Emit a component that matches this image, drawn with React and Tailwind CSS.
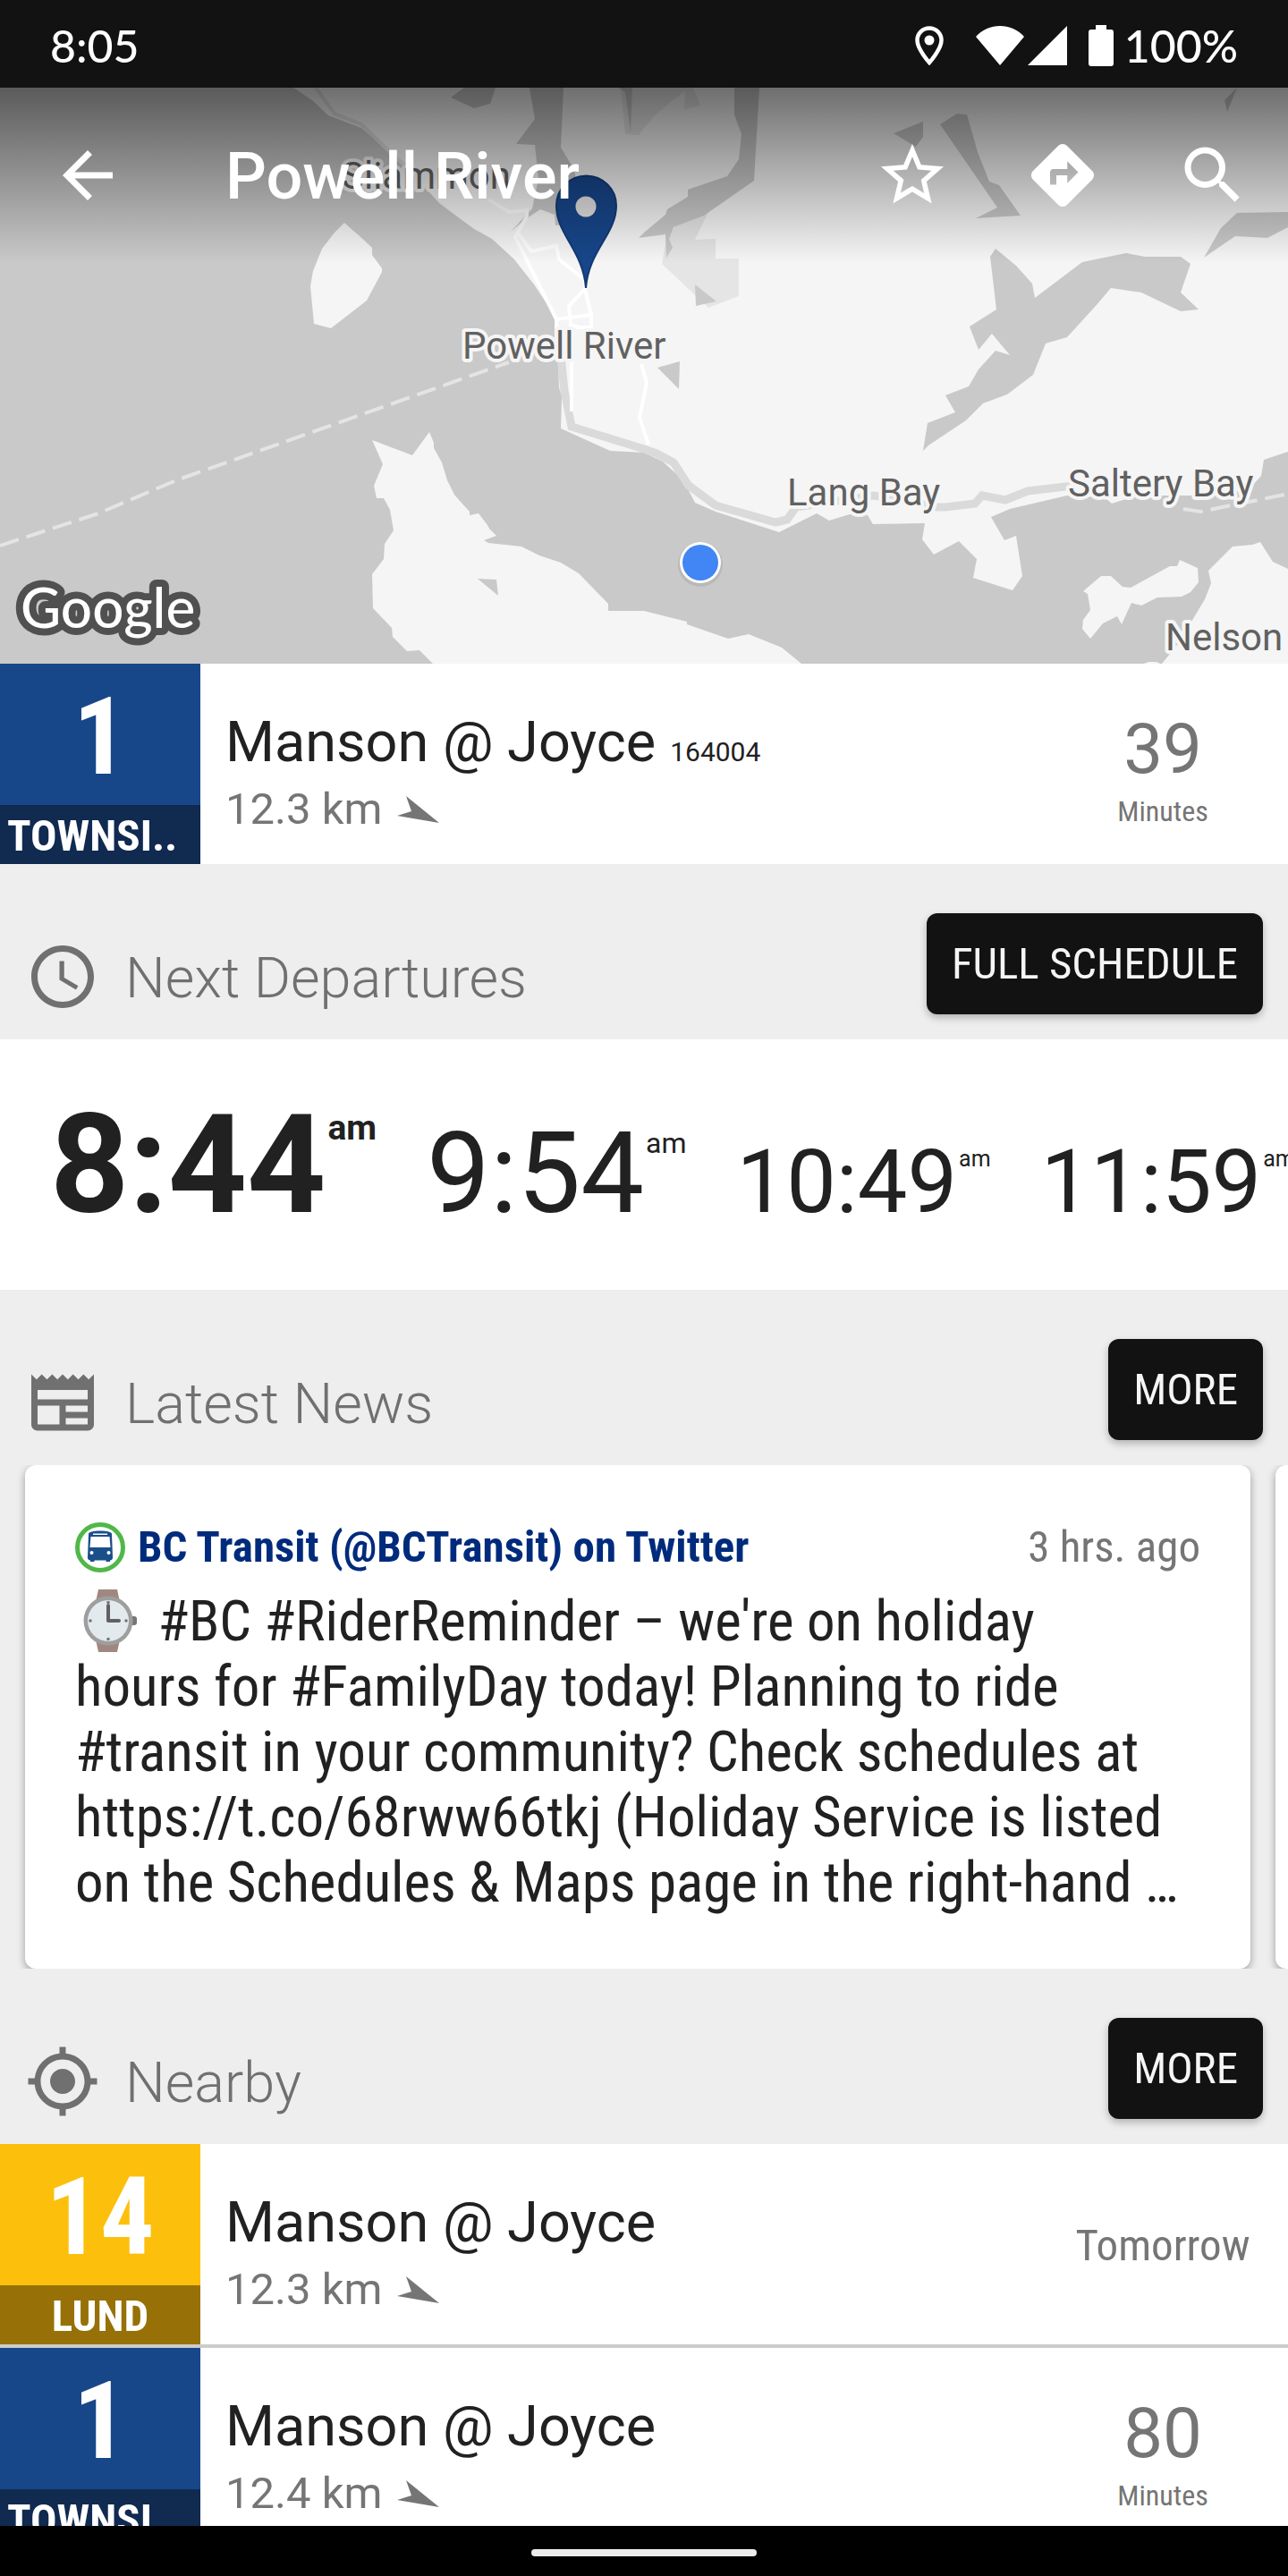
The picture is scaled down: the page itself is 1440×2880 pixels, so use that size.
import { MdAccessTime, MdArrowBack, MdDirections, MdGpsFixed, MdSearch, MdStarBorder } from "react-icons/md";

const condensed = "font-['Roboto_Condensed','Roboto',sans-serif]";

function StatusBar() {
  return (
    <header className="flex h-[98px] shrink-0 items-center justify-between bg-[#121212] px-14 pt-1 font-['Lato',sans-serif] text-[50px] leading-none font-medium text-white">
      <time>8:05</time>
      <div className="flex items-center">
        <svg className="mr-9 h-11 w-8" viewBox="0 0 32 44" fill="none" aria-label="Location in use">
          <path d="M16 2.5C8.5 2.5 2.5 8.5 2.5 16C2.5 26 16 41 16 41S29.5 26 29.5 16C29.5 8.5 23.5 2.5 16 2.5Z" stroke="white" strokeWidth="4.5" />
          <circle cx="16" cy="16" r="5.5" fill="white" />
        </svg>
        <svg className="mr-1 h-11 w-[54px]" viewBox="0 0 54 44" fill="white" aria-label="Wi-Fi">
          <path d="M27 44L0 12C7 4 17 0 27 0S47 4 54 12Z" />
        </svg>
        <svg className="mr-6 h-11 w-11" viewBox="0 0 44 44" fill="white" aria-label="Mobile signal">
          <path d="M0 44L44 0V44Z" />
        </svg>
        <svg className="mr-3 h-[46px] w-7" viewBox="0 0 28 46" fill="white" aria-label="Battery">
          <path d="M8 0H20V5H25A3 3 0 0 1 28 8V43A3 3 0 0 1 25 46H3A3 3 0 0 1 0 43V8A3 3 0 0 1 3 5H8Z" />
        </svg>
        <span>100%</span>
      </div>
    </header>
  );
}

const parks = [
  "694,98 699,150 714,151 720,143 734,127 766,101 765,122 783,118 775,98",
  "793,235 777,268 800,267 800,289 826,289 826,331 792,344 740,295 745,267 754,254",
];

const lakes = [
  "592,98 598,133 577,161 598,162 602,200 595,233 571,259 585,247 604,234 620,240 621,252 640,250 650,230 642,190 638,183 627,165 630,98",
  "714,266 744,262 745,288 752,277 748,267 753,254 787,241 843,202 849,98 821,98 821,128 829,150 826,178 813,197 769,212 769,220 746,234 744,240 720,260",
  "519,98 504,109 530,121 548,116 554,98",
  "692,98 699,103 705,148 707,98",
  "999,149 1032,136 1032,153 1024,164",
  "1051,139 1070,127 1081,128 1093,170 1106,203 1117,207 1141,241 1091,244 1115,232",
  "1113,278 1136,297 1154,317 1157,333 1210,293 1259,283 1280,287 1320,287 1331,295 1320,327 1340,346 1320,348 1276,327 1242,322 1225,342 1193,377 1169,384 1155,419 1126,441 1099,451 1080,470 1038,498 1032,504 1037,473 1068,461 1057,442 1083,432 1094,413 1113,392 1129,397 1109,373 1094,391 1084,365 1114,346 1107,287",
  "1383,238 1440,237 1440,254 1417,266 1381,264 1346,288 1365,255",
  "1383,98 1369,112 1372,125",
  "735,411 760,404 759,435",
  "777,318 801,337 778,342",
];

const islands = [
  "385,249 395,258 401,263 416,277 416,285 427,300 427,304 410,336 370,367 351,362 347,320 350,303 360,278 374,260",
  "416,492 461,509 480,483 485,495 485,501 494,517 500,537 508,553 514,560 525,572 525,576 535,574 545,587 547,591 555,599 541,604 546,607 583,611 603,621 627,629 647,641 680,675 680,683 720,683 768,695 768,698 814,714 837,709 874,724 896,742 484,742 469,727 455,728 439,712 438,702 417,680 416,642 429,625 430,608 440,593 436,570 429,557 421,557 418,543 428,519",
  "1378,611 1400,609 1409,606 1423,628 1440,636 1440,742 1299,742 1320,716 1335,690 1347,670 1354,652 1351,638",
  "1319,626 1339,635 1340,651 1331,662 1321,667 1294,668 1276,677 1265,674 1254,698 1249,689 1233,697 1219,714 1210,703 1211,693 1219,682 1216,664 1211,661 1231,644 1242,644 1255,656 1264,657 1308,633 1316,633",
  "1279,742 1284,740 1293,740 1297,742",
];

const places = [
  { name: "Sliammon", x: 382, y: 211 },
  { name: "Powell River", x: 517, y: 401 },
  { name: "Lang Bay", x: 880, y: 565 },
  { name: "Saltery Bay", x: 1194, y: 555 },
  { name: "Nelson", x: 1303, y: 727 },
];

function MapView() {
  return (
    <svg className="h-full w-full" viewBox="0 98 1440 644" preserveAspectRatio="xMidYMid slice" role="img" aria-label="Map of Powell River">
      <rect y="98" width="1440" height="644" fill="#c9c9c9" />
      <polygon
        fill="#f5f5f5"
        points="328,98 349,112 367,129 404,143 436,170 452,187 482,217 491,227 530,256 550,267 575,290 597,318 615,345 620,353 621,380 624,407 625,433 628,443 627,479 682,504 720,506 741,516 764,537 777,562 800,572 871,595 913,574 927,582 950,575 970,576 976,586 1034,585 1031,603 1044,620 1072,605 1092,625 1088,646 1132,660 1143,644 1136,599 1123,604 1108,578 1129,569 1193,554 1235,556 1243,563 1271,554 1363,554 1398,545 1410,532 1413,514 1440,505 1440,98"
      />
      {parks.map((p) => <polygon key={p} points={p} fill="#e5e5e5" />)}
      {lakes.map((p) => <polygon key={p} points={p} fill="#c9c9c9" />)}
      {islands.map((p) => <polygon key={p} points={p} fill="#f5f5f5" />)}
      <polygon points="534,647 555,648 557,666" fill="#c9c9c9" />

      <g fill="none" stroke="#dadada" strokeWidth="9">
        <path d="M353 98L374 127L404 139L436 170L459 190" stroke="#e2e2e2" strokeWidth="4" />
        <path d="M628 380V407L631 437L639 477L720 502L734 507L753 517L770 543L800 565L867 584L880 581L890 567L977 554L1048 567L1057 567L1090 563L1098 554L1124 559L1149 549L1200 543" />
      </g>
      <g fill="none" stroke="#ffffff" strokeWidth="4">
        <path d="M546 223L569 237L589 235V242L576 265L622 357V380" />
        <path d="M579 260L594 281L622 275L625 290L654 313V323L636 342L638 363L647 366H661V352L654 323" />
        <path d="M622 357L661 352M639 380V460M717 407L723 428L715 467L725 497" />
      </g>
      <g fill="none" stroke="#e4e4e4" strokeWidth="4" strokeDasharray="22 9">
        <path d="M0 610L110 574L197 537L569 405" />
        <path d="M1323 569L1342 572L1436 553" />
      </g>

      <g className="font-['Roboto',sans-serif] text-[42px]" fill="#616161" stroke="#f5f5f5" strokeWidth="8" strokeLinejoin="round" paintOrder="stroke">
        {places.map((p) => <text key={p.name} x={p.x} y={p.y}>{p.name}</text>)}
      </g>

      <path d="M655 322C652 280 622 262 622 230A33.5 33.5 0 0 1 689 230C689 262 658 280 655 322Z" fill="#17468a" stroke="#123a75" strokeWidth="2" />
      <circle cx="655" cy="231" r="11.5" fill="#e0e0e0" />

      <circle cx="783" cy="631" r="25" fill="#000000" opacity="0.08" />
      <circle cx="783" cy="629" r="23" fill="#ffffff" />
      <circle cx="783" cy="629" r="20" fill="#4285f4" />

      <text x="23" y="702" className="font-['Lato',sans-serif] text-[62px] font-medium" fill="#ffffff" stroke="#505050" strokeWidth="16" strokeLinejoin="round" paintOrder="stroke">Google</text>
    </svg>
  );
}

function MapHeader() {
  return (
    <section className="relative h-[644px] shrink-0 overflow-hidden">
      <MapView />
      <div className="absolute inset-x-0 top-0 flex h-[196px] items-center justify-between bg-linear-to-b from-black/55 to-transparent px-[42px] text-white">
        <div className="flex min-w-0 items-center">
          <button type="button" aria-label="Back" className="ml-[14px]"><MdArrowBack size={84} /></button>
          <h1 className="ml-28 truncate pt-1 font-['Roboto',sans-serif] text-[72px] leading-[84px] font-medium">Powell River</h1>
        </div>
        <div className="flex shrink-0 items-center gap-[84px]">
          <button type="button" aria-label="Favourite"><MdStarBorder size={84} /></button>
          <button type="button" aria-label="Directions"><MdDirections size={84} /></button>
          <button type="button" aria-label="Search"><MdSearch size={84} /></button>
        </div>
      </div>
    </section>
  );
}

function StopRow({ route, line, dark, light, stop, code, distance, minutes, note }) {
  return (
    <article className="flex h-56 shrink-0 bg-white">
      <div className={`${condensed} ${light} flex w-56 shrink-0 flex-col font-bold text-white`}>
        <div className="flex h-[158px] items-center justify-center pt-1.5 text-[120px] leading-none">{route}</div>
        <div className={`${dark} flex-1 truncate px-2 text-[49px] leading-[70px] ${line.length > 6 ? "text-left" : "text-center"}`}>{line}</div>
      </div>
      <div className="min-w-0 flex-1 pt-[50px] pl-7 font-['Roboto',sans-serif]">
        <h3 className="truncate text-[63px] leading-[76px] text-[#212121]">
          {stop}
          {code && <span className="ml-4 text-[30px] leading-none">{code}</span>}
        </h3>
        <p className="mt-2 flex items-center text-[49px] leading-[58px] text-[#757575]">
          {distance}
          <svg className="ml-4 h-[30px] w-[47px]" viewBox="0 0 47 30" fill="currentColor" aria-label="South-east">
            <path d="M10 0L47 30L0 22L16 17Z" />
          </svg>
        </p>
      </div>
      {note ? (
        <p className={`${condensed} flex w-[280px] shrink-0 items-center justify-center pt-1 text-[49px] text-[#757575]`}>{note}</p>
      ) : (
        <div className="w-[280px] shrink-0 pt-14 text-center text-[#757575]">
          <p className="font-['Roboto',sans-serif] text-[78px] leading-20">{minutes}</p>
          <p className={`${condensed} mt-2.5 text-[32px] leading-[38px]`}>Minutes</p>
        </div>
      )}
    </article>
  );
}

function NewsIcon() {
  return (
    <svg className="h-[84px] w-[84px]" viewBox="0 0 24 24" fill="currentColor" aria-hidden="true">
      <path d="M22 3l-1.67 1.67L18.67 3 17 4.67 15.33 3l-1.66 1.67L12 3l-1.67 1.67L8.67 3 7 4.67 5.33 3 3.67 4.67 2 3v16c0 1.1.9 2 2 2h16c1.1 0 2-.9 2-2V3zM11 19H4v-6h7v6zm9 0h-7v-2h7v2zm0-4h-7v-2h7v2zm0-4H4V8h16v3z" />
    </svg>
  );
}

function SectionHeader({ icon, title, action }) {
  return (
    <div className="flex h-[196px] shrink-0 items-end justify-between px-7 pb-7">
      <div className="flex items-end text-[#707070]">
        {icon}
        <h2 className="ml-7 font-['Roboto',sans-serif] text-[63px] leading-[80px] font-light">{title}</h2>
      </div>
      <button type="button" className={`${condensed} h-[113px] rounded-xl bg-[#121212] px-7 text-[49px] text-[#f5f5f5] shadow-[0_4px_8px_rgba(0,0,0,0.25)]`}>
        {action}
      </button>
    </div>
  );
}

function Departures() {
  return (
    <ol className="flex h-[280px] shrink-0 items-baseline gap-14 overflow-x-auto bg-white px-14 pt-16 font-['Roboto',sans-serif] whitespace-nowrap text-[#212121] [scrollbar-width:none]">
      <li className="text-[154px] leading-none font-bold">8:44<span className="ml-0.5 align-[81px] text-[39px]">am</span></li>
      <li className="text-[126px] leading-none">9:54<span className="ml-0.5 align-[66px] text-[32px]">am</span></li>
      <li className="text-[99px] leading-none">10:49<span className="ml-0.5 align-[51px] text-[25px]">am</span></li>
      <li className="text-[99px] leading-none">11:59<span className="ml-0.5 align-[51px] text-[25px]">am</span></li>
    </ol>
  );
}

function BusAvatar() {
  return (
    <svg className="h-14 w-14 shrink-0" viewBox="0 0 56 56" aria-hidden="true">
      <circle cx="28" cy="28" r="25.5" fill="white" stroke="#4fb848" strokeWidth="5" />
      <path d="M15 13C15 11 20 9.5 28 9.5S41 11 41 13L42 39A3 3 0 0 1 39 42.5V44H34.5V42.5H21.5V44H17V42.5A3 3 0 0 1 14 39Z" fill="#1b4f8a" />
      <path d="M17.5 16H38.5L39.5 28H16.5Z" fill="white" />
      <path d="M20 12.5H36V14H20Z" fill="white" />
      <circle cx="18.5" cy="34" r="2" fill="white" />
      <circle cx="37.5" cy="34" r="2" fill="white" />
    </svg>
  );
}

function WatchIcon() {
  return (
    <svg className="inline-block h-[70px] w-[78px] align-[-13px]" viewBox="0 0 78 70" role="img" aria-label="Watch">
      <path d="M26 0H47L50 14H23ZM23 56H50L47 70H26Z" fill="#a1887f" />
      <rect x="60" y="30" width="9" height="10" rx="3" fill="#757575" />
      <circle cx="37" cy="35" r="27.5" fill="#9e9e9e" />
      <circle cx="37" cy="35" r="23" fill="#e3eaee" />
      <path d="M37 18V35H49" fill="none" stroke="#616161" strokeWidth="4" strokeLinecap="round" strokeLinejoin="round" />
      <g fill="#757575">
        <circle cx="37" cy="14.5" r="1.8" />
        <circle cx="37" cy="55.5" r="1.8" />
        <circle cx="17" cy="35" r="1.8" />
        <circle cx="57" cy="35" r="1.8" />
      </g>
    </svg>
  );
}

function News() {
  return (
    <div className="flex shrink-0 gap-7 overflow-x-auto px-7 [scrollbar-width:none]">
      <article className="w-[calc(100%-14px)] shrink-0 rounded-xl bg-white px-14 pt-16 pb-[60px] shadow-[0_3px_10px_rgba(0,0,0,0.35)]">
        <div className={`${condensed} flex items-center text-[49px] leading-[56px]`}>
          <BusAvatar />
          <a href="#bctransit" className="ml-[14px] truncate font-bold text-[#002b7c]">BC Transit (@BCTransit) on Twitter</a>
          <time className="ml-auto shrink-0 pl-6 text-[#757575]">3 hrs. ago</time>
        </div>
        <p className={`${condensed} mt-[18px] text-[63px] leading-[73px] text-[#212121]`}>
          <WatchIcon /> #BC #RiderReminder – we're on holiday
          <br />
          hours for #FamilyDay today! Planning to ride
          <br />
          #transit in your community? Check schedules at https://t.co/68rww66tkj (Holiday Service is listed on the Schedules &amp; Maps page in the right-hand …
        </p>
      </article>
      <article className="w-[calc(100%-14px)] shrink-0 rounded-xl bg-white shadow-[0_3px_10px_rgba(0,0,0,0.35)]" />
    </div>
  );
}

export default function App() {
  return (
    <div className="flex h-screen flex-col overflow-hidden bg-[#eeeeee]">
      <StatusBar />
      <main className="flex min-h-0 flex-1 flex-col overflow-y-auto [scrollbar-width:none]">
        <MapHeader />
        <StopRow route="1" line="TOWNSI.." light="bg-[#184789]" dark="bg-[#102a50]" stop="Manson @ Joyce" code="164004" distance="12.3 km" minutes="39" />
        <SectionHeader icon={<MdAccessTime size={84} />} title="Next Departures" action="FULL SCHEDULE" />
        <Departures />
        <SectionHeader icon={<NewsIcon />} title="Latest News" action="MORE" />
        <News />
        <SectionHeader icon={<MdGpsFixed size={84} />} title="Nearby" action="MORE" />
        <StopRow route="14" line="LUND" light="bg-[#fcbf0c]" dark="bg-[#977107]" stop="Manson @ Joyce" distance="12.3 km" note="Tomorrow" />
        <div className="h-1 shrink-0 bg-[#cccccc]" />
        <StopRow route="1" line="TOWNSI.." light="bg-[#184789]" dark="bg-[#102a50]" stop="Manson @ Joyce" distance="12.4 km" minutes="80" />
      </main>
      <nav aria-label="System navigation" className="flex h-14 shrink-0 items-center justify-center bg-black pt-1">
        <button type="button" aria-label="Home" className="h-2 w-[252px] rounded-full bg-[#ececec]" />
      </nav>
    </div>
  );
}
